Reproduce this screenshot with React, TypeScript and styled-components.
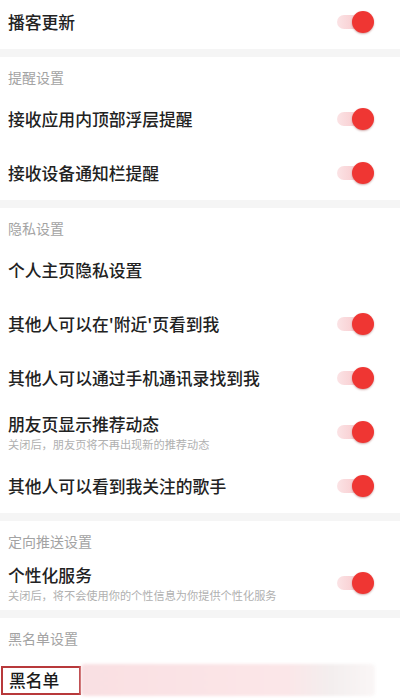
import React from "react";
import styled, { createGlobalStyle } from "styled-components";

type Item = {
    title: string;
    desc?: string;
    toggle?: boolean;
};

type Section = {
    header?: string;
    items: Item[];
};

const sections: Section[] = [
    { items: [{ title: "播客更新", toggle: true }] },
    {
        header: "提醒设置",
        items: [
            { title: "接收应用内顶部浮层提醒", toggle: true },
            { title: "接收设备通知栏提醒", toggle: true },
        ],
    },
    {
        header: "隐私设置",
        items: [
            { title: "个人主页隐私设置" },
            { title: "其他人可以在'附近'页看到我", toggle: true },
            { title: "其他人可以通过手机通讯录找到我", toggle: true },
            { title: "朋友页显示推荐动态", desc: "关闭后，朋友页将不再出现新的推荐动态", toggle: true },
            { title: "其他人可以看到我关注的歌手", toggle: true },
        ],
    },
    {
        header: "定向推送设置",
        items: [
            { title: "个性化服务", desc: "关闭后，将不会使用你的个性信息为你提供个性化服务", toggle: true },
        ],
    },
];

export default function App() {
    return (
        <>
            <GlobalStyle />
            <Page>
                {sections.map((section, si) => (
                    <Card key={si}>
                        {section.header && <SectionHeader>{section.header}</SectionHeader>}
                        {section.items.map((item, ii) => (
                            <Row key={ii} $clipped={si === 0}>
                                <TextBox>
                                    <Title>{item.title}</Title>
                                    {item.desc && <Desc>{item.desc}</Desc>}
                                </TextBox>
                                {item.toggle && (
                                    <Switch>
                                        <Knob />
                                    </Switch>
                                )}
                            </Row>
                        ))}
                    </Card>
                ))}
                <Card>
                    <SectionHeader>黑名单设置</SectionHeader>
                    <Row>
                        <Marked>黑名单</Marked>
                        <Smear />
                    </Row>
                </Card>
            </Page>
        </>
    );
}

const GlobalStyle = createGlobalStyle`
    html, body {
        margin: 0;
        padding: 0;
        background: #f4f4f4;
        overflow: hidden;
    }
    body {
        font-family: "Noto Sans CJK SC", "Noto Sans", sans-serif;
        color: #222;
    }
`;

const Page = styled.div`
    width: 400px;
    height: 699px;
    display: flex;
    flex-direction: column;
    gap: 8px;
    background: #f5f5f5;
    overflow: hidden;
`;

const Card = styled.div`
    background: #fff;
    display: flex;
    flex-direction: column;
    flex-shrink: 0;
`;

const SectionHeader = styled.div`
    height: 35px;
    padding: 0 8px 6px;
    box-sizing: border-box;
    display: flex;
    align-items: flex-end;
    font-size: 14px;
    line-height: 18px;
    color: #a3a3a3;
`;

const Row = styled.div<{ $clipped?: boolean }>`
    height: ${({ $clipped }) => ($clipped ? "49px" : "54px")};
    padding: ${({ $clipped }) => ($clipped ? "0 27px 5px 8px" : "0 27px 0 8px")};
    box-sizing: border-box;
    display: flex;
    align-items: center;
    justify-content: space-between;
`;

const TextBox = styled.div`
    display: flex;
    flex-direction: column;
`;

const Title = styled.div`
    font-size: 16.8px;
    line-height: 22px;
    font-weight: 500;
    color: #222;
    white-space: nowrap;
`;

const Desc = styled.div`
    font-size: 11.2px;
    line-height: 15px;
    color: #b0b0b0;
    margin-top: 2px;
    white-space: nowrap;
`;

const Switch = styled.div`
    width: 36px;
    height: 14px;
    border-radius: 7px;
    background: linear-gradient(90deg, #fbe3e5 0%, #f6b9bd 100%);
    position: relative;
    flex-shrink: 0;
`;

const Knob = styled.div`
    position: absolute;
    right: -1px;
    top: 50%;
    width: 22px;
    height: 22px;
    margin-top: -11px;
    border-radius: 50%;
    background: #ef3633;
    box-shadow: 0 1px 2px rgba(120, 20, 20, 0.35);
`;

const Marked = styled.div`
    margin-left: -7px;
    width: 80px;
    height: 29px;
    padding-left: 6px;
    box-sizing: border-box;
    border: 2px solid #b8393b;
    display: flex;
    align-items: center;
    font-size: 16.8px;
    font-weight: 500;
    color: #1a1a1a;
    background: #fff;
`;

const Smear = styled.div`
    flex: 1;
    height: 32px;
    margin-right: -2px;
    border-radius: 4px;
    background: linear-gradient(90deg, #f9dfe2 0%, #fbe6e8 70%, #f3eeee 85%, #faf6f6 100%);
    filter: blur(1.5px);
`;
